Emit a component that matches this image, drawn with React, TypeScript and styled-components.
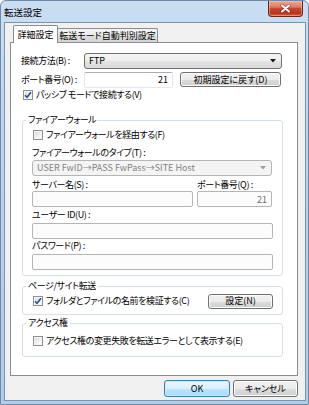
import React from "react";
import styled, { createGlobalStyle } from "styled-components";

const GlobalStyle = createGlobalStyle`
  html, body { margin: 0; padding: 0; background: #ffffff; }
  body {
    font-family: "Noto Sans CJK JP", "Noto Sans", sans-serif;
    font-size: 9px;
    line-height: 12px;
    letter-spacing: -0.4px;
    font-feature-settings: "palt";
    color: #000;
  }
  * { box-sizing: border-box; }
`;

const Window = styled.div`
  width: 309px;
  height: 405px;
  display: flex;
  flex-direction: column;
  background: linear-gradient(180deg, #cadef2 0%, #bcd4ed 35%, #b1cce9 100%);
  border: 1px solid #6f8aa8;
  border-radius: 6px 6px 0 0;
  overflow: hidden;
`;

const TitleBar = styled.div`
  height: 21px;
  flex: none;
  display: flex;
  align-items: flex-start;
  padding-left: 3px;
`;

const TitleText = styled.span`
  padding-top: 5px;
  font-size: 9.5px;
  letter-spacing: 0;
  color: #000;
`;

const CloseButton = styled.div`
  margin-left: auto;
  margin-right: 5px;
  width: 35px;
  height: 16px;
  border: 1px solid #6b2416;
  border-top: none;
  border-radius: 0 0 4px 4px;
  background: linear-gradient(180deg, #e9a996 0%, #dc7d66 40%, #c8492d 50%, #b9321a 80%, #d0603f 100%);
  box-shadow: inset 0 0 0 1px rgba(255, 210, 190, 0.45);
  display: flex;
  align-items: center;
  justify-content: center;
`;

const Client = styled.div`
  flex: 1;
  margin: 0 2px 3px 3px;
  border: 1px solid #7d93ad;
  background: #f0f0f0;
  padding: 2px 7px 0 5px;
  display: flex;
  flex-direction: column;
`;

const TabStrip = styled.div`
  height: 17px;
  display: flex;
  align-items: flex-end;
  padding-left: 3px;
`;

const Tab = styled.div<{ $active?: boolean; $w: number }>`
  width: ${(p) => p.$w}px;
  height: ${(p) => (p.$active ? 18 : 14)}px;
  margin-bottom: ${(p) => (p.$active ? -1 : 0)}px;
  margin-left: ${(p) => (p.$active ? 0 : -1)}px;
  position: relative;
  z-index: ${(p) => (p.$active ? 2 : 1)};
  border: 1px solid #898c95;
  border-bottom: none;
  border-radius: 2px 2px 0 0;
  background: ${(p) =>
    p.$active ? "#ffffff" : "linear-gradient(180deg, #f3f3f3 0%, #ebebeb 50%, #dddddd 51%, #d5d5d5 100%)"};
  display: flex;
  justify-content: center;
  padding-top: ${(p) => (p.$active ? 3 : 1)}px;
  letter-spacing: 0;
  white-space: nowrap;
`;

const Panel = styled.div`
  width: 288px;
  height: 334px;
  border: 1px solid #898c95;
  background: #ffffff;
  padding: 10px 14px 0 10px;
  display: flex;
  flex-direction: column;
`;

const Row = styled.div<{ $mt?: number; $h?: number }>`
  display: flex;
  align-items: center;
  margin-top: ${(p) => p.$mt ?? 0}px;
  height: ${(p) => p.$h ?? 12}px;
  flex: none;
`;

const FieldLabel = styled.span<{ $w?: number }>`
  width: ${(p) => (p.$w ? `${p.$w}px` : "auto")};
  white-space: nowrap;
  flex: none;
`;

const Combo = styled.div<{ $disabled?: boolean; $w: number }>`
  width: ${(p) => p.$w}px;
  height: 16px;
  border: 1px solid ${(p) => (p.$disabled ? "#b3b6b9" : "#707070")};
  border-radius: 3px;
  background: ${(p) =>
    p.$disabled
      ? "#f4f4f4"
      : "linear-gradient(180deg, #f4f4f4 0%, #eeeeee 50%, #e3e3e3 51%, #dadada 100%)"};
  color: ${(p) => (p.$disabled ? "#838383" : "#000")};
  display: flex;
  align-items: center;
  padding: 0 5px 0 4px;
  letter-spacing: 0;
  white-space: nowrap;
  flex: none;
`;

const ComboArrow = styled.svg`
  margin-left: auto;
  flex: none;
`;

const TextBox = styled.input<{ $w?: number; $disabled?: boolean; $right?: boolean; $ml?: number }>`
  width: ${(p) => (p.$w ? `${p.$w}px` : "100%")};
  height: 16px;
  margin: 0 0 0 ${(p) => p.$ml ?? 0}px;
  padding: 0 4px;
  font: inherit;
  font-size: 9px;
  line-height: 12px;
  letter-spacing: 0;
  text-align: ${(p) => (p.$right ? "right" : "left")};
  color: ${(p) => (p.$disabled ? "#6d6d6d" : "#000")};
  background: ${(p) => (p.$disabled ? "#fcfcfc" : "#ffffff")};
  border: 1px solid;
  border-color: ${(p) =>
    p.$disabled ? "#b5b5b5" : "#abadb3 #e2e3ea #e3e9ef #e2e3ea"};
  border-radius: 2px;
  outline: none;
  flex: none;
  &:disabled { -webkit-text-fill-color: #6d6d6d; opacity: 1; }
`;

const Button = styled.button<{ $w: number; $h?: number; $default?: boolean; $push?: boolean }>`
  width: ${(p) => p.$w}px;
  height: ${(p) => p.$h ?? 15}px;
  margin: 0 0 0 ${(p) => (p.$push ? "auto" : "0")};
  padding: 0;
  font: inherit;
  font-size: 9px;
  line-height: 12px;
  color: #000;
  border: 1px solid ${(p) => (p.$default ? "#3c7fb1" : "#707070")};
  border-radius: 3px;
  background: ${(p) =>
    p.$default
      ? "linear-gradient(180deg, #eaf6fd 0%, #d9f0fc 50%, #bee6fd 51%, #a7d9f5 100%)"
      : "linear-gradient(180deg, #f2f2f2 0%, #ebebeb 50%, #dddddd 51%, #cfcfcf 100%)"};
  box-shadow: inset 0 0 0 1px ${(p) => (p.$default ? "#c7ebfc" : "#fcfcfc")};
  white-space: nowrap;
  flex: none;
`;

const ButtonGap = styled.span<{ $w: number }>`
  width: ${(p) => p.$w}px;
  flex: none;
`;

const CheckLabel = styled.label<{ $ml?: number }>`
  display: flex;
  align-items: center;
  margin-left: ${(p) => p.$ml ?? 0}px;
  white-space: nowrap;
`;

const Box = styled.span`
  width: 10px;
  height: 10px;
  margin-right: 3px;
  border: 1px solid #8e8f8f;
  background: linear-gradient(135deg, #d6d6d6 0%, #f2f2f2 60%, #ffffff 100%);
  box-shadow: inset 0 0 0 1px #f6f6f6;
  display: flex;
  align-items: center;
  justify-content: center;
  flex: none;
`;

const Group = styled.section<{ $mt: number; $pb: number }>`
  margin: ${(p) => p.$mt}px 0 0 1px;
  padding: 0 9px ${(p) => p.$pb}px 9px;
  border: 1px solid #d5dfe5;
  border-radius: 3px;
  display: flex;
  flex-direction: column;
  flex: none;
`;

const GroupTitle = styled.div`
  align-self: flex-start;
  height: 12px;
  margin: -7px 0 0 -6px;
  padding: 0 2px;
  background: #ffffff;
  white-space: nowrap;
`;

const Footer = styled.div`
  display: flex;
  justify-content: flex-end;
  padding-top: 4px;
`;

const Check: React.FC<{ checked?: boolean; ml?: number; children: React.ReactNode }> = ({
  checked,
  ml,
  children,
}) => (
  <CheckLabel $ml={ml}>
    <Box>
      {checked && (
        <svg width="8" height="8" viewBox="0 0 8 8">
          <path d="M1 4.2 L3 6.3 L7 1.2" fill="none" stroke="#2b4e8f" strokeWidth="1.6" />
        </svg>
      )}
    </Box>
    <span>{children}</span>
  </CheckLabel>
);

const Arrow: React.FC<{ color: string }> = ({ color }) => (
  <ComboArrow width="6" height="4" viewBox="0 0 6 4">
    <path d="M0 0 H6 L3 3.5 Z" fill={color} />
  </ComboArrow>
);

export default function App() {
  return (
    <>
      <GlobalStyle />
      <Window>
        <TitleBar>
          <TitleText>転送設定</TitleText>
          <CloseButton>
            <svg width="11" height="9" viewBox="0 0 11 9">
              <path d="M2 1.5 L9 7.5 M9 1.5 L2 7.5" stroke="#5a1a0e" strokeWidth="3.4" strokeLinecap="round" opacity="0.5" />
              <path d="M2 1.5 L9 7.5 M9 1.5 L2 7.5" stroke="#ffffff" strokeWidth="2" strokeLinecap="round" />
            </svg>
          </CloseButton>
        </TitleBar>
        <Client>
          <TabStrip>
            <Tab $active $w={45}>詳細設定</Tab>
            <Tab $w={101}>転送モード自動判別設定</Tab>
          </TabStrip>
          <Panel>
            <Row $h={16}>
              <FieldLabel $w={63}>接続方法(B) :</FieldLabel>
              <Combo $w={198}>
                FTP
                <Arrow color="#1a1a1a" />
              </Combo>
            </Row>
            <Row $mt={3} $h={15}>
              <FieldLabel $w={63}>ポート番号(O) :</FieldLabel>
              <TextBox $w={89} $right readOnly value="21" />
              <ButtonGap $w={7} />
              <Button $w={101}>初期設定に戻す(D)</Button>
            </Row>
            <Row $mt={2}>
              <Check checked ml={2}>パッシブ モードで接続する(V)</Check>
            </Row>

            <Group $mt={19} $pb={5}>
              <GroupTitle>ファイアーウォール</GroupTitle>
              <Row $mt={3}>
                <Check ml={1}>ファイアーウォールを経由する(F)</Check>
              </Row>
              <Row $mt={6}>
                <FieldLabel>ファイアーウォールのタイプ(T) :</FieldLabel>
              </Row>
              <Row $mt={1} $h={16}>
                <Combo $disabled $w={240}>
                  USER FwID→PASS FwPass→SITE Host
                  <Arrow color="#a0a0a0" />
                </Combo>
              </Row>
              <Row $mt={3}>
                <FieldLabel $w={165}>サーバー名(S) :</FieldLabel>
                <FieldLabel>ポート番号(Q) :</FieldLabel>
              </Row>
              <Row $h={16}>
                <TextBox $w={161} $disabled disabled value="" />
                <TextBox $w={75} $ml={4} $disabled disabled $right value="21" />
              </Row>
              <Row $mt={2}>
                <FieldLabel>ユーザー ID(U) :</FieldLabel>
              </Row>
              <Row $mt={2} $h={16}>
                <TextBox $disabled disabled value="" />
              </Row>
              <Row $mt={1}>
                <FieldLabel>パスワード(P) :</FieldLabel>
              </Row>
              <Row $mt={2} $h={16}>
                <TextBox $disabled disabled value="" />
              </Row>
            </Group>

            <Group $mt={10} $pb={5}>
              <GroupTitle>ページ/サイト転送</GroupTitle>
              <Row $mt={1} $h={16}>
                <Check checked ml={1}>フォルダとファイルの名前を検証する(C)</Check>
                <Button $w={65} $push>設定(N)</Button>
              </Row>
            </Group>

            <Group $mt={8} $pb={9}>
              <GroupTitle>アクセス権</GroupTitle>
              <Row $mt={6}>
                <Check ml={1}>アクセス権の変更失敗を転送エラーとして表示する(E)</Check>
              </Row>
            </Group>
          </Panel>
          <Footer>
            <Button $w={66} $h={17} $default>OK</Button>
            <ButtonGap $w={3} />
            <Button $w={65} $h={17}>キャンセル</Button>
          </Footer>
        </Client>
      </Window>
    </>
  );
}
